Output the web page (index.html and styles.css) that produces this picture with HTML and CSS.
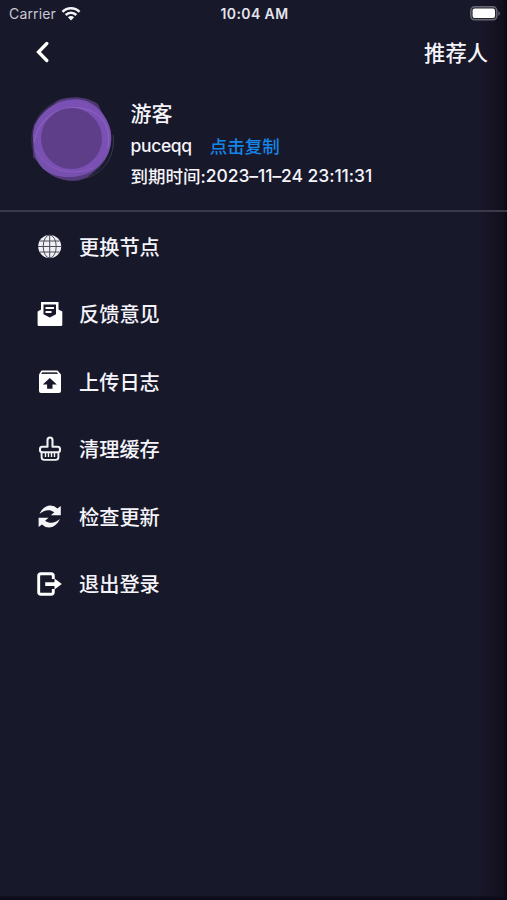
FILE: index.html
```html
<!DOCTYPE html>
<html lang="zh-CN">
<head>
<meta charset="utf-8">
<title>我的</title>
<link rel="stylesheet" href="styles.css">
</head>
<body>
<div class="screen">
  <header class="status">
    <div class="carrier"><span class="carrier-name">Carrier</span>
      <svg class="wifi" viewBox="0 0 20 16"><g fill="none" stroke="#f4f4f8" stroke-width="2.6"><path d="M1.5 5.8C6.2 1 13.8 1 18.5 5.8"/><path d="M4.7 9C7.700 6 12.300 6 15.300 9"/></g><path d="M6.900 11.300C8.600 9.700 11.400 9.700 13.100 11.300L10 14.500z" fill="#f4f4f8"/></svg>
    </div>
    <span class="clock">10:04 AM</span>
    <svg class="battery" viewBox="0 0 30 15"><rect x=".8" y=".8" width="26" height="13" rx="3.8" fill="#24242f" stroke="#686874" stroke-width="1.5"/><rect x="2.6" y="2.6" width="22.4" height="9.4" rx="2" fill="#fff"/><path d="M28.400 5.200c2 1 2 3.600 0 4.600z" fill="#686874"/></svg>
  </header>
  <nav class="nav">
    <svg class="back" viewBox="0 0 14 22"><path d="M11.800 2.500 3.500 11l8.300 8.500" fill="none" stroke="#fff" stroke-width="3.300" stroke-linecap="round" stroke-linejoin="miter"/></svg>
    <span class="referrer">推荐人</span>
  </nav>
  <section class="profile">
    <svg class="avatar" viewBox="0 0 90 90">
      <ellipse cx="43" cy="44.500" rx="40" ry="41" fill="#51407a" opacity=".45"/>
      <path d="M30 5C45 0 60 2 70 9L82 35C86 55 70 75 58 83 46 89 32 85 22 79L5 62 6 30z" fill="#694596" opacity=".65"/>
      <path d="M41 5C60 1 75 14 81 30S81 64 69 73 39 85 24 79 6 61 5 43 20 8 41 5z" fill="#7650ad"/>
      <ellipse cx="45" cy="42" rx="37.500" ry="37" fill="#7b50b5"/>
      <path d="M6 48C10 22 34 8 57 14S82 38 80 53" fill="none" stroke="#9870c3" stroke-width="1" opacity=".65"/>
      <path d="M8 55C16 73 40 83 65 73" fill="none" stroke="#9064bd" stroke-width="1" opacity=".6"/>
      <path d="M85 40C88 60 76 78 58 83" fill="none" stroke="#484057" stroke-width=".8"/>
      <circle cx="43.500" cy="43.500" r="30.500" fill="#5f3e89"/>
    </svg>
    <div class="info">
      <div class="name">游客</div>
      <div class="account"><span class="user">puceqq</span><span class="copy">点击复制</span></div>
      <div class="expiry"><span class="label">到期时间:</span><span class="date">2023–11–24 23:11:31</span></div>
    </div>
  </section>
  <ul class="menu">
    <li><svg class="icon" viewBox="0 0 28 28"><circle cx="13.700" cy="13.500" r="11.500" fill="#f0eff5"/><g fill="none" stroke="#4c4c5a" stroke-width="1"><path d="M13.700 2v23M2 13.500h23.500M4 8h19.500M4 19h19.500"/><ellipse cx="13.700" cy="13.500" rx="6.500" ry="11.500"/></g></svg><span>更换节点</span></li>
    <li><svg class="icon" viewBox="0 0 28 28"><path d="M5 2h17.500v7.500l3.800 2v13.300q0 1.200-1.200 1.200H2.800q-1.200 0-1.200-1.200V11.500l3.400-2z" fill="#fff"/><path d="M7.500 4.500H20v9.800l-6.200 3.200-6.300-3.200z" fill="#171829"/><path d="M9.500 8h8.500M9.500 12h6" stroke="#fff" stroke-width="1.800"/></svg><span>反馈意见</span></li>
    <li><svg class="icon" viewBox="0 0 28 28"><path d="M5.500 2.500h16l3.500 4v16.500q0 2-2 2H5q-2 0-2-2V6.500z" fill="#fff"/><path d="M6.300 4.300h14.500l1.300 1.800H5z" fill="#343442"/><path d="m13.800 10 7 6.500h-4.300v4.300h-5.400v-4.300H6.800z" fill="#171829"/></svg><span>上传日志</span></li>
    <li><svg class="icon" viewBox="0 0 28 28"><g fill="none" stroke="#f1f1f6" stroke-width="2.100" stroke-linejoin="round"><path d="M11.500 11.800V5.200q0-2.700 2.500-2.700t2.500 2.700v6.600h5q2.500 0 2.500 2.400v1.100q0 1.900-2.500 1.900H6.500q-2.500 0-2.500-1.900v-1.100q0-2.400 2.500-2.400z"/><path d="M5.600 17.500V22q0 2.900 2.900 2.900h11q2.900 0 2.900-2.900v-4.500" stroke-width="1.900"/><path d="M9.500 18v4M12.500 18v4M15.500 18v4M18.500 18v4" stroke-width="1.400"/></g></svg><span>清理缓存</span></li>
    <li><svg class="icon" viewBox="0 0 28 28"><g fill="#f5f5f8"><path d="M3.500 11C6 5.500 10 2.500 14.500 2.500q4 0 6.900 3L24.800 3v9.300h-10l3.500-3C13.500 5.800 8 7 3.500 11z"/><path d="M3.500 11C6 5.500 10 2.500 14.500 2.500q4 0 6.900 3L24.800 3v9.300h-10l3.500-3C13.500 5.800 8 7 3.500 11z" transform="rotate(180 13.700 13.500)"/></g></svg><span>检查更新</span></li>
    <li><svg class="icon" viewBox="0 0 28 28"><path d="M17.300 9V6q0-2.300-2.300-2.300H5Q2.700 3.700 2.700 6v16q0 2.300 2.300 2.300h10q2.300 0 2.300-2.300v-3" fill="none" stroke="#fff" stroke-width="2.900"/><path d="M9.200 12.300h9.300V8.600l7.300 5.500-7.300 5.500v-3.700H9.200z" fill="#fff"/></svg><span>退出登录</span></li>
  </ul>
</div>
</body>
</html>
```
FILE: styles.css
```css
* { box-sizing: border-box; }
body {
  margin: 0;
  background: #171829;
  color: #f5f4fa;
  font-family: Inter, "Noto Sans CJK SC", sans-serif;
}
.screen {
  width: 507px;
  height: 900px;
  overflow: hidden;
  background:
    linear-gradient(to top, #0b0b19 0, #0b0b19 2px, transparent 5px),
    linear-gradient(to right, transparent 478px, #191427 487px, #11101d 503px, #080812 507px),
    #171829;
}
.status {
  height: 27px;
  padding: 0 7px 0 9px;
  display: grid;
  grid-template-columns: 1fr auto 1fr;
  align-items: center;
}
.carrier { display: flex; align-items: center; gap: 5px; color: #c9c9d3; }
.carrier-name { font-size: 14px; letter-spacing: .15px; }
.wifi { width: 20px; height: 16px; }
.clock { font-weight: 600; font-size: 14px; letter-spacing: .4px; color: #e4e4ec; }
.battery { width: 30px; height: 15px; justify-self: end; }
.nav {
  height: 50px;
  padding: 0 19px 0 35px;
  display: flex;
  align-items: center;
  justify-content: space-between;
}
.back { width: 14px; height: 22px; }
.referrer { padding-top: 1px; font-size: 21.3px; font-weight: 500; line-height: 30px; }
.profile {
  height: 135px;
  padding: 18px 0 0 28px;
  display: flex;
  border-bottom: 2px solid #3a3949;
}
.avatar { width: 90px; height: 90px; flex: none; }
.info { padding-left: 12.5px; }
.name { height: 35px; line-height: 38px; font-size: 21px; font-weight: 500; }
.account { height: 31px; display: flex; gap: 18px; align-items: center; font-size: 17.5px; }
.user { font-size: 17.5px; font-weight: 500; letter-spacing: -.35px; }
.copy { color: #1785e8; font-weight: 500; }
.expiry { height: 28px; display: flex; align-items: center; font-size: 17.5px; font-weight: 500; white-space: nowrap; }
.date { letter-spacing: -.07px; }
.menu { list-style: none; margin: 0; padding: 1px 0 0 36px; }
.menu li { height: 67.5px; display: flex; align-items: center; gap: 15px; font-size: 20.2px; font-weight: 500; line-height: 30px; }
.menu span { padding-top: 2px; }
.icon { width: 28px; height: 28px; flex: none; }
```
